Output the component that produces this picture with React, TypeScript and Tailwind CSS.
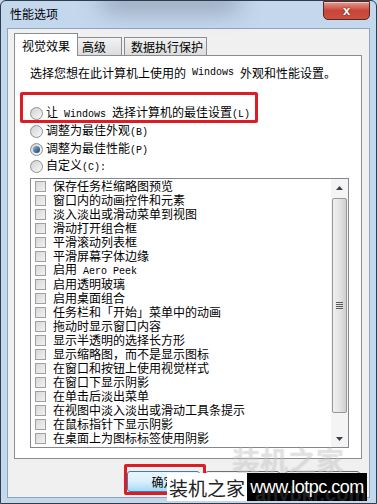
const items = [
  "保存任务栏缩略图预览",
  "窗口内的动画控件和元素",
  "淡入淡出或滑动菜单到视图",
  "滑动打开组合框",
  "平滑滚动列表框",
  "平滑屏幕字体边缘",
  "启用| Aero Peek",
  "启用透明玻璃",
  "启用桌面组合",
  "任务栏和「开始」菜单中的动画",
  "拖动时显示窗口内容",
  "显示半透明的选择长方形",
  "显示缩略图，而不是显示图标",
  "在窗口和按钮上使用视觉样式",
  "在窗口下显示阴影",
  "在单击后淡出菜单",
  "在视图中淡入淡出或滑动工具条提示",
  "在鼠标指针下显示阴影",
  "在桌面上为图标标签使用阴影",
]

function Lat({ children }: { children: React.ReactNode }) {
  return <span className="whitespace-pre font-['Liberation_Mono'] text-[10px]">{children}</span>
}

function Radio({ checked }: { checked?: boolean }) {
  return (
    <span className="flex h-[13px] w-[13px] shrink-0 items-center justify-center rounded-full border border-[#8e8f8f] bg-linear-to-br from-[#cfcfcf] to-[#fbfbfb]">
      {checked && (
        <span className="h-[7px] w-[7px] rounded-full bg-linear-to-br from-[#8cb9e3] to-[#1b3f68]" />
      )}
    </span>
  )
}

function Check() {
  return (
    <span className="h-[11px] w-[11px] shrink-0 border border-[#a0a0a0] bg-linear-to-br from-[#d8d8d8] to-[#f2f2f2]" />
  )
}

export default function App() {
  return (
    <div className="relative h-[504px] w-[377px] overflow-hidden bg-[#c3d7ed] font-['Noto_Sans_CJK_SC',sans-serif] text-[12px] text-black">
      {/* glass blur from desktop behind */}
      <div className="absolute left-[100px] top-[-6px] h-[14px] w-[140px] rounded-full bg-[#4a5868] opacity-60 blur-md" />
      <div className="absolute inset-0 rounded-t-[6px] border border-[#2e3c4c] pointer-events-none" />

      {/* title bar */}
      <div className="relative flex h-[28px] items-start justify-between">
        <span className="pl-[10px] pt-[7px] leading-[14px]">性能选项</span>
        <div className="mr-[7px] mt-[1px] flex h-[19px] w-[47px] items-center justify-center rounded-b-[5px] border border-[#5a2420] bg-linear-to-b from-[#e19a8d] via-[#c8463a] to-[#c9503f] shadow-[inset_0_1px_0_rgba(255,255,255,0.5)]">
          <span className="font-['Liberation_Sans'] text-[13px] font-bold leading-none text-white [text-shadow:0_0_2px_#5a1a12]">x</span>
        </div>
      </div>

      {/* client area */}
      <div className="mx-[7px] flex h-[470px] flex-col border border-[#8ea4bd] bg-[#f0f0f0] pl-[6px] pr-[7px] pt-[4px]">
        {/* tabs */}
        <div className="relative z-10 -mb-px flex items-end">
          <div className="flex h-[23px] w-[64px] items-end justify-center border border-b-0 border-[#898c95] bg-white pb-[3px] leading-[14px]">
            视觉效果
          </div>
          <div className="flex h-[19px] w-[44px] items-end border border-b-[#898c95] border-l-0 border-[#898c95] bg-linear-to-b from-[#f3f3f3] to-[#dcdcdc] pb-[1px] pl-[4px] leading-[14px]">
            高级
          </div>
          <div className="ml-[2px] flex h-[19px] w-[83px] items-end border border-[#898c95] bg-linear-to-b from-[#f3f3f3] to-[#dcdcdc] pb-[1px] pl-[6px] leading-[14px]">
            数据执行保护
          </div>
        </div>

        {/* tab page */}
        <div className="flex h-[404px] flex-col border border-[#898c95] bg-white pl-[15px] pr-[12px]">
          <div className="mt-[10px] flex h-[14px] items-center leading-[14px]">
            选择您想在此计算机上使用的<Lat> Windows </Lat>外观和性能设置。
          </div>

          <div className="mt-[24px] flex flex-col">
            <div className="flex h-[18px] items-center gap-[3px] leading-[14px]">
              <Radio />
              <span>
                让<Lat> Windows </Lat>选择计算机的最佳设置<Lat>(L)</Lat>
              </span>
            </div>
            <div className="flex h-[18px] items-center gap-[3px] leading-[14px]">
              <Radio />
              <span>
                调整为最佳外观<Lat>(B)</Lat>
              </span>
            </div>
            <div className="flex h-[18px] items-center gap-[3px] leading-[14px]">
              <Radio checked />
              <span>
                调整为最佳性能<Lat>(P)</Lat>
              </span>
            </div>
            <div className="flex h-[17px] items-center gap-[3px] leading-[14px]">
              <Radio />
              <span>
                自定义<Lat>(C):</Lat>
              </span>
            </div>
          </div>

          {/* list box */}
          <div className="mt-[3px] flex h-[270px] border border-[#828790] bg-white">
            <div className="flex flex-1 flex-col">
              {items.map((t) => {
                const [cn, lat] = t.split("|")
                return (
                  <div key={t} className="flex h-[14px] shrink-0 items-center gap-[7px] whitespace-nowrap pl-[4px] leading-[14px]">
                    <Check />
                    <span>
                      {cn}
                      {lat && <Lat>{lat}</Lat>}
                    </span>
                  </div>
                )
              })}
            </div>
            <div className="flex w-[17px] flex-col bg-[#f4f4f4]">
              <div className="flex h-[17px] items-center justify-center">
                <svg width="7" height="4" viewBox="0 0 7 4">
                  <path d="M0 4 L3.5 0 L7 4 Z" fill="#404040" />
                </svg>
              </div>
              <div className="ml-[1px] mr-[1px] mt-[2px] flex h-[215px] items-center justify-center rounded-[2px] border border-[#979797] bg-linear-to-r from-[#f1f1f1] via-[#e4e4e4] to-[#cfcfcf]">
                <div className="flex flex-col gap-[1px]">
                  <span className="h-px w-[7px] bg-[#5a5a5a]" />
                  <span className="h-px w-[7px] bg-[#5a5a5a]" />
                  <span className="h-px w-[7px] bg-[#5a5a5a]" />
                  <span className="h-px w-[7px] bg-[#5a5a5a]" />
                </div>
              </div>
              <div className="flex-1" />
              <div className="flex h-[17px] items-center justify-center">
                <svg width="7" height="4" viewBox="0 0 7 4">
                  <path d="M0 0 L7 0 L3.5 4 Z" fill="#404040" />
                </svg>
              </div>
            </div>
          </div>
        </div>

        {/* buttons */}
        <div className="mt-[12px] flex gap-[5px] pl-[113px]">
          <div className="flex h-[21px] w-[73px] items-center justify-center rounded-[3px] border border-[#3c7fb1] bg-linear-to-b from-[#eaf6fd] via-[#d9f0fc] to-[#a7d9f5] leading-[14px]">
            确定
          </div>
          <div className="flex h-[21px] w-[75px] items-center justify-center rounded-[3px] border border-[#707070] bg-linear-to-b from-[#f2f2f2] via-[#e6e6e6] to-[#d0d0d0] leading-[14px]">
            取消
          </div>
          <div className="flex h-[21px] w-[75px] items-center justify-center rounded-[3px] border border-[#707070] bg-linear-to-b from-[#f2f2f2] via-[#e6e6e6] to-[#d0d0d0] leading-[14px]">
            应用
          </div>
        </div>
      </div>

      {/* red annotation boxes */}
      <div className="absolute left-[20px] top-[92px] h-[31px] w-[238px] rounded-[2px] border-[3px] border-[#dd1c24]" />
      <div className="absolute left-[124px] top-[464px] h-[31px] w-[82px] rounded-[2px] border-[3px] border-[#dd1c24]" />

      {/* watermark */}
      <div className="absolute left-[232px] top-[446px] text-[28px] font-bold leading-none text-white/25 [text-shadow:0_0_1px_rgba(140,140,140,0.35)]">
        装机之家
      </div>
      <div className="absolute left-[167px] top-[473px] flex h-[28px] w-[80px] items-center justify-center bg-white text-[19px] leading-none text-[#222]">
        装机之家
      </div>
      <div className="absolute left-[247px] top-[473px] flex h-[28px] w-[120px] items-center justify-center overflow-hidden bg-black">
        <span className="absolute left-[8px] top-[11px] font-['Liberation_Sans'] text-[20px] font-bold leading-none text-[#555]/40">anybkr.com</span>
        <span className="relative font-['Liberation_Sans'] text-[18px] leading-none tracking-[-0.5px] text-white">www.lotpc.com</span>
      </div>
    </div>
  )
}
